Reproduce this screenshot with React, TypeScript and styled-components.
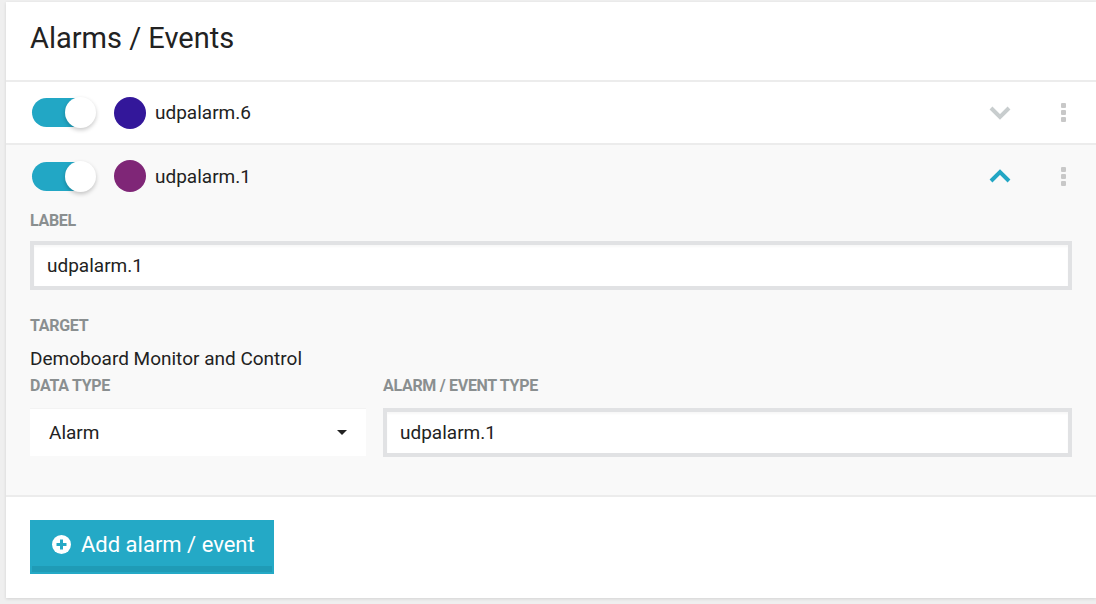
import React from "react";
import styled, { createGlobalStyle } from "styled-components";

const Global = createGlobalStyle`
  html, body { margin: 0; padding: 0; }
  body {
    background: #efefef;
    font-family: Roboto, "Liberation Sans", sans-serif;
    color: #262626;
  }
  * { box-sizing: border-box; }
`;

const Page = styled.div`
  padding: 2px 0 6px 6px;
  height: 604px;
  overflow: hidden;
`;

const Card = styled.div`
  background: #fff;
  box-shadow: 0 1px 3px rgba(0, 0, 0, 0.12);
  display: flex;
  flex-direction: column;
`;

const Header = styled.div`
  height: 80px;
  padding: 0 24px;
  display: flex;
  align-items: center;
  border-bottom: 2px solid #ececec;
`;

const Title = styled.h1`
  margin: 0;
  font-weight: 400;
  font-size: 29px;
  line-height: 34px;
  color: #222;
  padding-bottom: 6px;
`;

const Item = styled.div<{ $open?: boolean }>`
  background: ${(p) => (p.$open ? "#f9f9f9" : "#fff")};
  border-bottom: 2px solid #ececec;
  padding: ${(p) => (p.$open ? "0 24px 38px 24px" : "0 24px")};
`;

const ItemHead = styled.div<{ $open?: boolean }>`
  height: ${(p) => (p.$open ? "62px" : "61px")};
  display: flex;
  align-items: center;
`;

const Toggle = styled.div`
  position: relative;
  width: 62px;
  height: 29px;
  margin-left: 2px;
  border-radius: 15px;
  background: #22a7c5;
`;

const Knob = styled.div`
  position: absolute;
  right: -2px;
  top: -1px;
  width: 31px;
  height: 31px;
  border-radius: 50%;
  background: #fff;
  box-shadow: 0 2px 4px rgba(0, 0, 0, 0.22);
`;

const Dot = styled.div<{ $color: string }>`
  width: 32px;
  height: 32px;
  border-radius: 50%;
  background: ${(p) => p.$color};
  margin-left: 20px;
`;

const Name = styled.span`
  margin-left: 9px;
  font-size: 19px;
  color: #222;
  flex: 1;
`;

const Chevron = styled.svg`
  width: 22px;
  height: 14px;
  margin-right: 50px;
`;

const Kebab = styled.div`
  display: flex;
  flex-direction: column;
  gap: 2px;
  margin-right: 6px;
  span {
    width: 5px;
    height: 5px;
    border-radius: 1px;
    background: #c8c8c8;
  }
`;

const FieldLabel = styled.div`
  font-size: 16px;
  line-height: 16px;
  font-weight: 700;
  color: #8a8f90;
  letter-spacing: -0.3px;
`;

const TextInput = styled.div`
  height: 49px;
  border: 4px solid #e1e2e4;
  background: #fff;
  box-shadow: inset 0 2px 2px rgba(0, 0, 0, 0.03);
  display: flex;
  align-items: center;
  padding: 0 13px;
  font-size: 19px;
  color: #222;
`;

const LabelBlock = styled.div`
  margin-top: 6px;
  display: flex;
  flex-direction: column;
  gap: 12px;
`;

const TargetBlock = styled.div`
  margin-top: 28px;
  display: flex;
  flex-direction: column;
  gap: 14px;
`;

const TargetText = styled.div`
  font-size: 19px;
  line-height: 22px;
  color: #222;
`;

const Columns = styled.div`
  display: grid;
  grid-template-columns: 336px 1fr;
  column-gap: 17px;
  row-gap: 14px;
  margin-top: 8px;
`;

const Select = styled.div`
  height: 48px;
  background: #fff;
  display: flex;
  align-items: center;
  justify-content: space-between;
  padding: 0 19px;
  font-size: 19px;
  color: #222;
  border-top: 1px solid #f3f3f3;
`;

const Caret = styled.span`
  width: 0;
  height: 0;
  border-left: 5px solid transparent;
  border-right: 5px solid transparent;
  border-top: 5px solid #222;
`;

const Footer = styled.div`
  padding: 23px 24px 24px 24px;
  height: 101px;
`;

const AddButton = styled.button`
  position: relative;
  height: 54px;
  width: 244px;
  border: none;
  background: #24a9c6;
  color: #fff;
  font-family: inherit;
  font-size: 22px;
  display: flex;
  align-items: center;
  gap: 10px;
  padding: 0 0 6px 22px;
  cursor: pointer;
  &::after {
    content: "";
    position: absolute;
    left: 2px;
    right: 2px;
    bottom: 2px;
    height: 6px;
    background: #1f9bb6;
  }
`;

const PlusIcon = () => (
  <svg width="19" height="19" viewBox="0 0 19 19">
    <circle cx="9.5" cy="9.5" r="9.5" fill="#fff" />
    <rect x="4.5" y="8" width="10" height="3" fill="#24a9c6" />
    <rect x="8" y="4.5" width="3" height="10" fill="#24a9c6" />
  </svg>
);

const ChevronIcon = ({ up, color }: { up?: boolean; color: string }) => (
  <Chevron viewBox="0 0 22 14">
    <polyline
      points={up ? "2,12 11,3 20,12" : "2,2 11,11 20,2"}
      fill="none"
      stroke={color}
      strokeWidth="4"
    />
  </Chevron>
);

const Row = ({
  color,
  name,
  open,
  children,
}: {
  color: string;
  name: string;
  open?: boolean;
  children?: React.ReactNode;
}) => (
  <Item $open={open}>
    <ItemHead $open={open}>
      <Toggle>
        <Knob />
      </Toggle>
      <Dot $color={color} />
      <Name>{name}</Name>
      <ChevronIcon up={open} color={open ? "#22a6c4" : "#c8cdce"} />
      <Kebab>
        <span />
        <span />
        <span />
      </Kebab>
    </ItemHead>
    {children}
  </Item>
);

export default function App() {
  return (
    <>
      <Global />
      <Page>
        <Card>
          <Header>
            <Title>Alarms / Events</Title>
          </Header>
          <Row color="#33179a" name="udpalarm.6" />
          <Row color="#7f2677" name="udpalarm.1" open>
            <LabelBlock>
              <FieldLabel>LABEL</FieldLabel>
              <TextInput>udpalarm.1</TextInput>
            </LabelBlock>
            <TargetBlock>
              <FieldLabel>TARGET</FieldLabel>
              <TargetText>Demoboard Monitor and Control</TargetText>
            </TargetBlock>
            <Columns>
              <FieldLabel>DATA TYPE</FieldLabel>
              <FieldLabel>ALARM / EVENT TYPE</FieldLabel>
              <Select>
                Alarm
                <Caret />
              </Select>
              <TextInput>udpalarm.1</TextInput>
            </Columns>
          </Row>
          <Footer>
            <AddButton>
              <PlusIcon />
              Add alarm / event
            </AddButton>
          </Footer>
        </Card>
      </Page>
    </>
  );
}
